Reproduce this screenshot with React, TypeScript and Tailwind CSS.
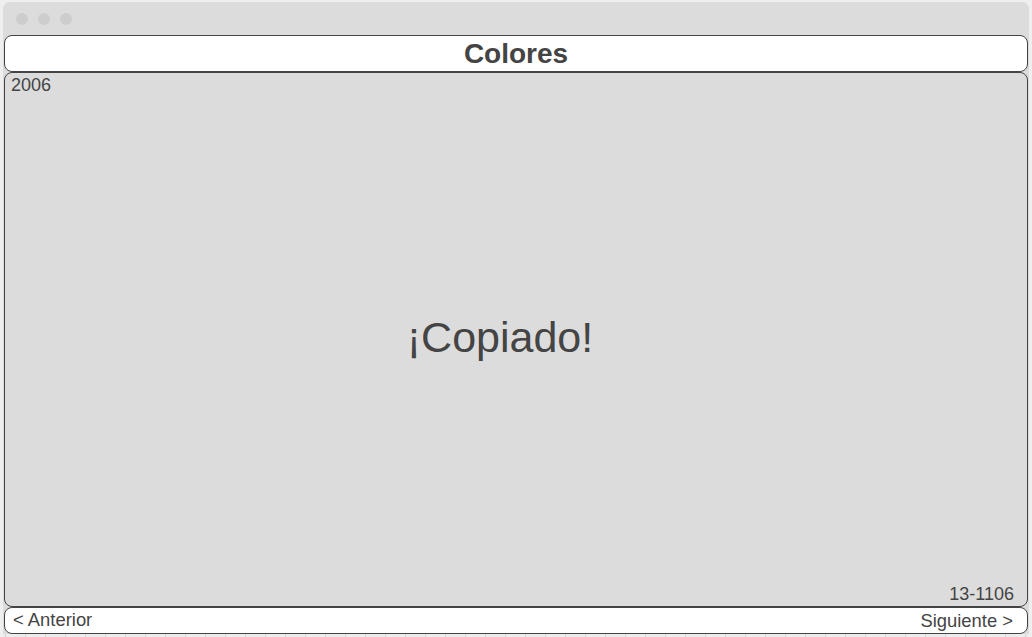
export default function App() {
  return (
    <div className="h-[637px] w-[1032px] overflow-hidden bg-[#efefef] pt-[2px] pl-[3px] pr-[3px] font-['Liberation_Sans',Arial,sans-serif] text-[#444]">
      <div className="flex h-[635px] flex-col rounded-t-[7px] bg-[#dcdcdc]">
        <div className="flex h-[33px] shrink-0 items-center gap-[10px] pl-[13px]">
          <span className="h-[12px] w-[12px] rounded-full bg-[#cdcdcd]" />
          <span className="h-[12px] w-[12px] rounded-full bg-[#cdcdcd]" />
          <span className="h-[12px] w-[12px] rounded-full bg-[#cdcdcd]" />
        </div>
        <div className="mx-[1px] flex h-[37px] shrink-0 items-center justify-center rounded-[8px] border border-[#444] bg-white">
          <h1 className="text-[28px] font-bold leading-none">Colores</h1>
        </div>
        <div className="relative mx-[1px] flex h-[535px] shrink-0 items-center justify-center rounded-[8px] border border-[#444] bg-[#dcdcdc] pr-[32px]">
          <span className="absolute left-[6px] top-[1px] text-[18px] leading-[22px]">2006</span>
          <span className="mb-[4px] text-[43px] leading-none">¡Copiado!</span>
          <span className="absolute bottom-[1px] right-[13px] text-[18px] leading-[22px]">13-1106</span>
        </div>
        <div className="mx-[1px] flex h-[27px] shrink-0 items-center justify-between rounded-[8px] border border-[#444] bg-white pl-[8px] pr-[14px]">
          <span className="mb-[1px] text-[18.4px] leading-none">&lt; Anterior</span>
          <span className="mt-[1px] text-[18.4px] leading-none">Siguiente &gt;</span>
        </div>
        <div className="h-[3px] bg-[#ececec] bg-[linear-gradient(90deg,#d4d4d4_1px,transparent_1px)] bg-[length:20px_100%] bg-[position:2px_0]" />
      </div>
    </div>
  );
}
